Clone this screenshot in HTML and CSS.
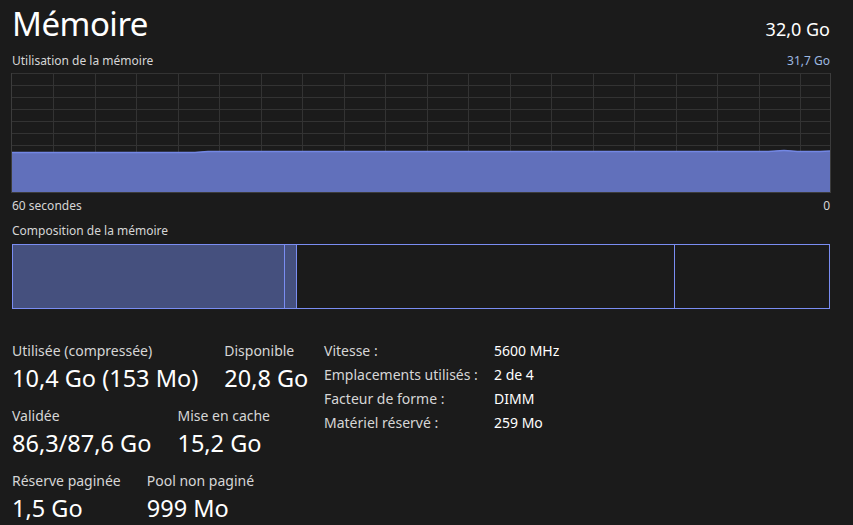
FILE: index.html
```html
<!DOCTYPE html>
<html lang="fr">
<head>
    <meta charset="UTF-8">
    <title>Mémoire</title>
    <link rel="stylesheet" href="styles.css">
</head>
<body>
    <div class="page">
        <div class="header">
            <h1 class="title">Mémoire</h1>
            <div class="total">32,0 Go</div>
        </div>

        <div class="caption">
            <span>Utilisation de la mémoire</span>
            <span class="max">31,7 Go</span>
        </div>
        <div class="graph">
            <svg viewBox="0 0 818 119" preserveAspectRatio="none" width="818" height="119">
                <g stroke="#333" stroke-width="1">
                    <line x1="0" y1="0.5" x2="818" y2="0.5"/>
                    <line x1="0" y1="12.5" x2="818" y2="12.5"/>
                    <line x1="0" y1="24.5" x2="818" y2="24.5"/>
                    <line x1="0" y1="36.5" x2="818" y2="36.5"/>
                    <line x1="0" y1="48.5" x2="818" y2="48.5"/>
                    <line x1="0" y1="60.5" x2="818" y2="60.5"/>
                    <line x1="0" y1="72.5" x2="818" y2="72.5"/>
                    <line x1="0" y1="84.5" x2="818" y2="84.5"/>
                    <line x1="0" y1="96.5" x2="818" y2="96.5"/>
                    <line x1="0" y1="108.5" x2="818" y2="108.5"/>
                    <line x1="41.5" y1="0" x2="41.5" y2="119"/>
                    <line x1="83.5" y1="0" x2="83.5" y2="119"/>
                    <line x1="124.5" y1="0" x2="124.5" y2="119"/>
                    <line x1="166.5" y1="0" x2="166.5" y2="119"/>
                    <line x1="207.5" y1="0" x2="207.5" y2="119"/>
                    <line x1="249.5" y1="0" x2="249.5" y2="119"/>
                    <line x1="290.5" y1="0" x2="290.5" y2="119"/>
                    <line x1="332.5" y1="0" x2="332.5" y2="119"/>
                    <line x1="373.5" y1="0" x2="373.5" y2="119"/>
                    <line x1="415.5" y1="0" x2="415.5" y2="119"/>
                    <line x1="456.5" y1="0" x2="456.5" y2="119"/>
                    <line x1="498.5" y1="0" x2="498.5" y2="119"/>
                    <line x1="539.5" y1="0" x2="539.5" y2="119"/>
                    <line x1="581.5" y1="0" x2="581.5" y2="119"/>
                    <line x1="622.5" y1="0" x2="622.5" y2="119"/>
                    <line x1="664.5" y1="0" x2="664.5" y2="119"/>
                    <line x1="705.5" y1="0" x2="705.5" y2="119"/>
                    <line x1="747.5" y1="0" x2="747.5" y2="119"/>
                    <line x1="788.5" y1="0" x2="788.5" y2="119"/>
                </g>
                <path class="area" d="M0 79.5 L183 79.5 C188 79.5 190 78.6 196 78.6 L750 78.6 C760 78.6 766 77.6 772 77.6 C778 77.6 782 78.6 790 78.6 L808 78.6 L818 78 L818 119 L0 119 Z"/>
                <path class="edge" d="M0 79.5 L183 79.5 C188 79.5 190 78.6 196 78.6 L750 78.6 C760 78.6 766 77.6 772 77.6 C778 77.6 782 78.6 790 78.6 L808 78.6 L818 78"/>
            </svg>
        </div>
        <div class="axis">
            <span>60 secondes</span>
            <span>0</span>
        </div>

        <div class="caption comp-caption">Composition de la mémoire</div>
        <div class="composition">
            <div class="seg used" style="width: 271px"></div>
            <div class="seg modified" style="width: 11px"></div>
            <div class="seg standby" style="width: 377px"></div>
            <div class="seg free"></div>
        </div>

        <div class="details">
            <div class="stats">
                <div class="stat-row">
                    <div class="stat">
                        <div class="label">Utilisée (compressée)</div>
                        <div class="value">10,4 Go (153 Mo)</div>
                    </div>
                    <div class="stat">
                        <div class="label">Disponible</div>
                        <div class="value">20,8 Go</div>
                    </div>
                </div>
                <div class="stat-row">
                    <div class="stat">
                        <div class="label">Validée</div>
                        <div class="value">86,3/87,6 Go</div>
                    </div>
                    <div class="stat">
                        <div class="label">Mise en cache</div>
                        <div class="value">15,2 Go</div>
                    </div>
                </div>
                <div class="stat-row">
                    <div class="stat">
                        <div class="label">Réserve paginée</div>
                        <div class="value">1,5 Go</div>
                    </div>
                    <div class="stat">
                        <div class="label">Pool non paginé</div>
                        <div class="value">999 Mo</div>
                    </div>
                </div>
            </div>

            <div class="info">
                <span class="key">Vitesse :</span><span class="val">5600 MHz</span>
                <span class="key">Emplacements utilisés :</span><span class="val">2 de 4</span>
                <span class="key">Facteur de forme :</span><span class="val">DIMM</span>
                <span class="key">Matériel réservé :</span><span class="val">259 Mo</span>
            </div>
        </div>
    </div>
</body>
</html>
```

FILE: styles.css
```css
html, body {
    margin: 0;
    padding: 0;
    background: #1b1b1b;
    color: #ffffff;
    font-family: "Noto Sans", "Open Sans", sans-serif;
}
.page {
    width: 818px;
    padding: 0 12px;
}
.header {
    display: flex;
    justify-content: space-between;
    align-items: baseline;
    height: 52px;
}
.title {
    margin: 0;
    font-size: 33px;
    font-weight: 400;
    line-height: 48px;
    letter-spacing: -0.5px;
}
.total {
    font-size: 18px;
    line-height: 48px;
}
.caption {
    display: flex;
    justify-content: space-between;
    font-size: 12px;
    line-height: 17px;
    color: #d6d6d6;
}
.caption .max {
    color: #9db8e0;
}
.graph {
    margin-top: 4px;
    height: 119px;
    border-left: 1px solid #3c3c3c;
    border-right: 1px solid #3c3c3c;
    border-bottom: 1px solid #3c3c3c;
    margin-left: -1px;
    margin-right: -1px;
}
.graph svg {
    display: block;
}
.graph .area {
    fill: #6170bb;
}
.graph .edge {
    fill: none;
    stroke: #7387e4;
    stroke-width: 1.5;
}
.axis {
    display: flex;
    justify-content: space-between;
    font-size: 12px;
    line-height: 17px;
    margin-top: 4px;
    color: #d6d6d6;
}
.comp-caption {
    margin-top: 8px;
}
.composition {
    margin-top: 5px;
    display: flex;
    height: 65px;
    box-sizing: border-box;
    border: 1px solid #7a8df2;
}
.seg {
    height: 100%;
    border-right: 1px solid #7a8df2;
}
.seg.used, .seg.modified {
    background: #45507e;
}
.seg.free {
    flex: 1;
    border-right: none;
}
.details {
    display: flex;
    margin-top: 32px;
}
.stats {
    width: 312px;
}
.stat-row {
    display: flex;
    gap: 26px;
    margin-bottom: 11px;
}
.label {
    font-size: 14px;
    line-height: 20px;
    color: #d6d6d6;
}
.value {
    font-size: 23.5px;
    line-height: 34px;
}
.info {
    display: grid;
    grid-template-columns: 170px auto;
    grid-auto-rows: 24px;
    font-size: 14px;
    line-height: 20px;
    align-content: start;
}
.info .key {
    color: #d6d6d6;
}
```
